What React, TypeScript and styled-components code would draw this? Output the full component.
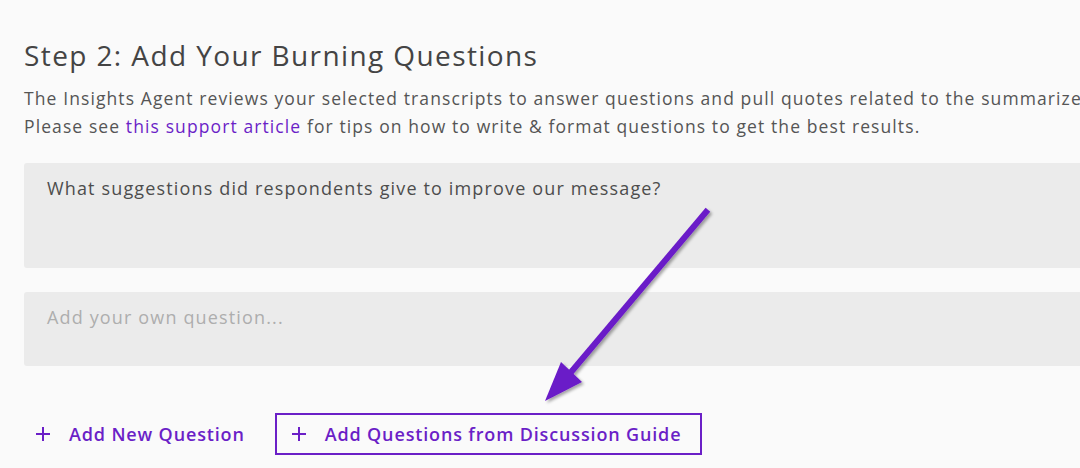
import styled, { createGlobalStyle } from 'styled-components'

const GlobalStyle = createGlobalStyle`
  html, body {
    margin: 0;
    padding: 0;
    background: #fafafa;
    overflow: hidden;
  }
  body {
    font-family: "Open Sans", "Liberation Sans", sans-serif;
    color: #4a4a4a;
  }
`

const Page = styled.div`
  position: relative;
  width: 1200px;
  height: 468px;
  padding: 36px 0 0 24px;
  box-sizing: border-box;
`

const Title = styled.h2`
  margin: 0;
  font-size: 28px;
  font-weight: 400;
  line-height: 38px;
  letter-spacing: 1.4px;
  color: #444;
`

const Intro = styled.p`
  margin: 10px 0 0;
  font-size: 17.5px;
  line-height: 28px;
  letter-spacing: 1.1px;
  color: #555;
  white-space: nowrap;

  a {
    color: #6b1fc7;
    text-decoration: none;
  }
`

const Questions = styled.div`
  display: flex;
  flex-direction: column;
  gap: 24px;
  margin-top: 23px;
`

const QuestionBox = styled.div<{ $tall?: boolean; $placeholder?: boolean }>`
  height: ${(p) => (p.$tall ? '105px' : '74px')};
  background: #ebebeb;
  border-radius: 3px;
  padding: 12px 23px;
  box-sizing: border-box;
  font-size: 18px;
  line-height: 26px;
  letter-spacing: 1.15px;
  color: ${(p) => (p.$placeholder ? '#aeaeae' : '#4d4d4d')};
`

const Actions = styled.div`
  display: flex;
  align-items: center;
  gap: 28px;
  margin-top: 47px;
  padding-left: 9px;
`

const ActionButton = styled.button<{ $outlined?: boolean }>`
  display: flex;
  align-items: center;
  gap: 18px;
  background: none;
  border: ${(p) => (p.$outlined ? '2px solid #6b1fc7' : '2px solid transparent')};
  padding: ${(p) => (p.$outlined ? '0 19px 0 14px' : '0')};
  height: 42px;
  font-family: "Open Sans", sans-serif;
  font-size: 18px;
  font-weight: 600;
  letter-spacing: 0.85px;
  color: #6b1fc7;
  cursor: pointer;
`

const Arrow = styled.svg`
  position: absolute;
  left: 530px;
  top: 200px;
  overflow: visible;
`

function Plus() {
  return (
    <svg width="16" height="16" viewBox="0 0 16 16">
      <path d="M8 1v14M1 8h14" stroke="#6b1fc7" strokeWidth="2" />
    </svg>
  )
}

export default function App() {
  return (
    <Page>
      <GlobalStyle />
      <Title>Step 2: Add Your Burning Questions</Title>
      <Intro>
        The Insights Agent reviews your selected transcripts to answer questions and pull quotes related to the summarized topics.
        <br />
        Please see <a href="#">this support article</a> for tips on how to write &amp; format questions to get the best results.
      </Intro>
      <Questions>
        <QuestionBox $tall>What suggestions did respondents give to improve our message?</QuestionBox>
        <QuestionBox $placeholder>Add your own question...</QuestionBox>
      </Questions>
      <Actions>
        <ActionButton>
          <Plus />
          Add New Question
        </ActionButton>
        <ActionButton $outlined>
          <Plus />
          Add Questions from Discussion Guide
        </ActionButton>
      </Actions>
      <Arrow width="200" height="210" viewBox="0 0 200 210">
        <defs>
          <filter id="sh" x="-20%" y="-20%" width="140%" height="140%">
            <feDropShadow dx="2" dy="2" stdDeviation="1.5" floodColor="#000" floodOpacity="0.35" />
          </filter>
        </defs>
        <g filter="url(#sh)">
          <path d="M176 12 L42 171" stroke="#6a1ac8" strokeWidth="6" strokeLinecap="square" />
          <path d="M15 201 L31 162 L52 182 Z" fill="#6a1ac8" />
        </g>
      </Arrow>
    </Page>
  )
}
